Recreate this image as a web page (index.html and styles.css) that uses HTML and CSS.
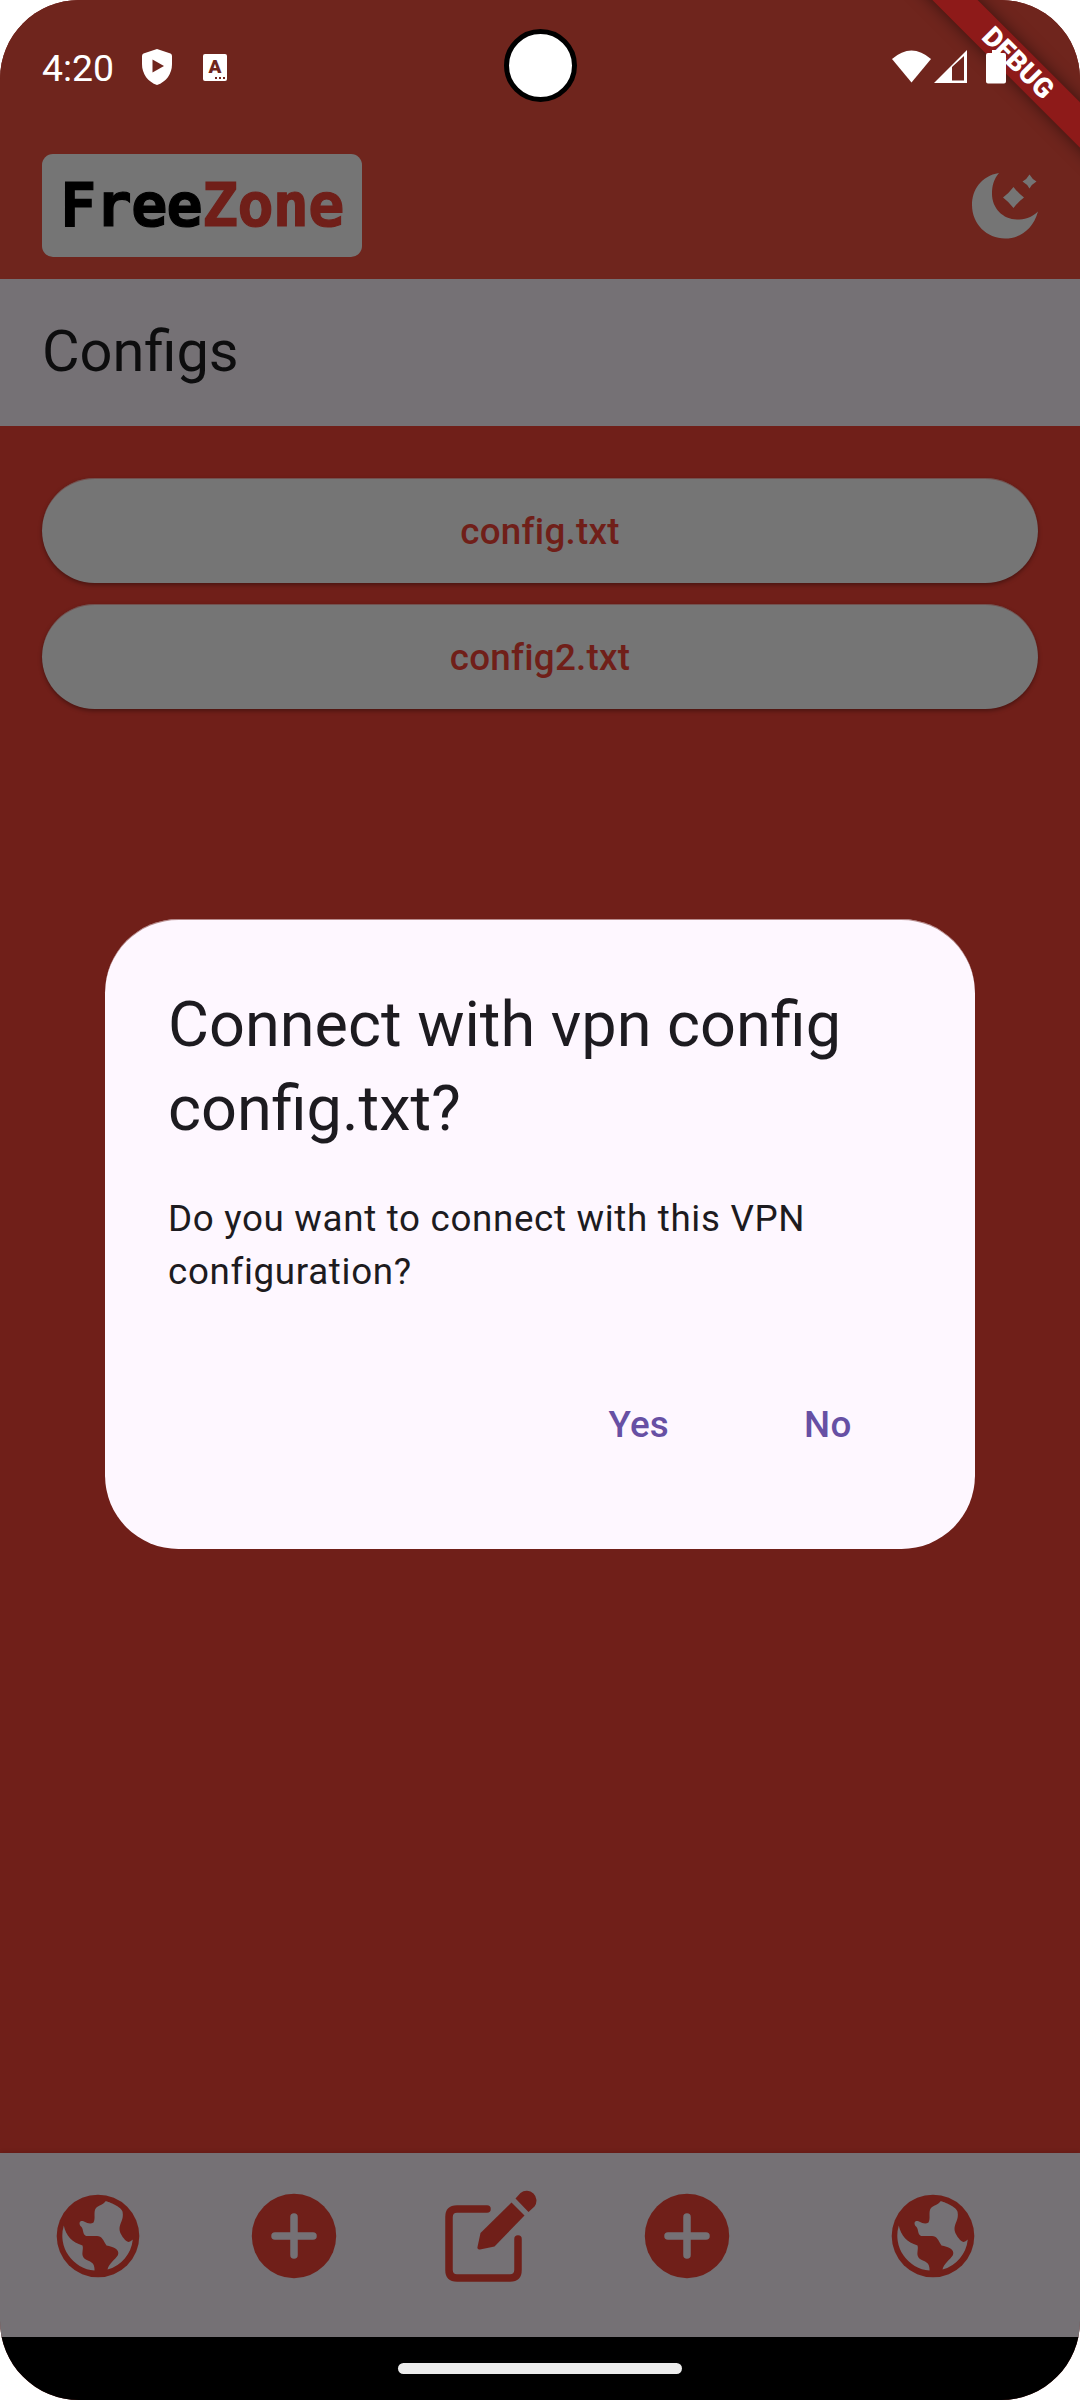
FILE: index.html
```html
<!DOCTYPE html>
<html lang="en">
<head>
<meta charset="utf-8">
<title>FreeZone</title>
<link rel="stylesheet" href="styles.css">
</head>
<body>
<svg class="defs" aria-hidden="true">
  <symbol id="globe" viewBox="0 0 84 84">
    <circle cx="42" cy="42" r="41.3"/>
    <path class="cut" d="M49.500 7.200C53 7.500 66 13 66.600 18C68 26 63.500 29 63.500 35C63.500 39 67 44 70 46.800Q73 49.500 76.800 45.500A35 35 0 0 1 51.500 75.600C53 69 59 66 62 61C64 55 57 53 50.500 51.500C47 46 46 42 41 42H30C26 40 28 34 24.500 32C22 28 25 26 28 27.500Q34 31 37.500 28.500C40 24 37 18 40 14C43 11 47 11 49.500 7.200Z"/>
    <path class="cut" d="M7.800 31.500C10 42 16 48 26.500 51.500C28 56 24 61 29 65C34 68 39 68 38.500 76.500A35 35 0 0 1 7.800 31.500Z"/>
  </symbol>
  <symbol id="plus" viewBox="0 0 86 86">
    <circle cx="43" cy="43" r="42.200"/>
    <path class="cut-line" d="M43 24V62M24 43H62"/>
  </symbol>
</svg>
<div class="phone">
  <div class="status">
    <span class="clock">4:20</span>
    <svg class="shield" viewBox="0 0 30 36"><path d="M15 0L28.500 4.500Q30 5 30 7V15C30 25 24 33 15 36C6 33 0 25 0 15V7Q0 5 1.500 4.500Z"/><path class="hole" d="M10.500 10.500L22 17L10.500 23.500Z"/></svg>
    <div class="letter-icon"><span>A</span><i></i></div>
    <svg class="signals" viewBox="0 0 115 36">
      <path d="M0 9Q19.500-8 39 9L19.500 32.500Z"/>
      <path fill-rule="evenodd" d="M42 33L75 0V33ZM60 17V30.500H72V6Z"/>
      <path d="M100 0H108.500V3H112Q114 3 114 5V31.500Q114 33.500 112 33.500H96Q94 33.500 94 31.500V5Q94 3 96 3H100Z"/>
    </svg>
  </div>
  <header class="header">
    <div class="logo"><span>Free</span><span class="zone">Zone</span></div>
    <svg class="moon" viewBox="0 0 66 66"><path d="M27 0C9 3 0 17 0 32C0 51 15 65.500 33 65.500C47 65.500 61 57 66 38.500C59 45 52 46.500 45 46.500C31 46.500 20 35 20 21C20 12 22 6 27 0Z"/><path d="M41.500 14Q46 20 52 24.500Q46 29 41.500 35Q37 29 31 24.500Q37 20 41.500 14ZM57.500 1.500Q60 6 64.500 8.500Q60 11 57.500 15.500Q55 11 50.500 8.500Q55 6 57.500 1.500Z"/></svg>
  </header>
  <h1 class="title">Configs</h1>
  <main class="list">
    <button class="config">config.txt</button>
    <button class="config">config2.txt</button>
  </main>
  <nav class="nav">
    <svg class="globe"><use href="#globe"/></svg>
    <svg class="plus"><use href="#plus"/></svg>
    <svg class="edit" viewBox="0 0 92 92">
      <path class="frame" d="M42 19H12Q4 19 4 27V80Q4 88 12 88H65Q73 88 73 80V49"/>
      <path d="M66.500 12.500L79.500 25.500L49.500 56.500L35 59.500Q32 60 32.500 57L35.500 43Z"/>
      <path d="M70.500 8.500L75.500 3A9.800 9.800 0 0 1 89.500 16.500L83.500 22Z"/>
    </svg>
    <svg class="plus"><use href="#plus"/></svg>
    <svg class="globe"><use href="#globe"/></svg>
  </nav>
  <div class="gesture"><i></i></div>
  <section class="dialog" role="dialog">
    <h2>Connect with vpn config config.txt?</h2>
    <p>Do you want to connect with this VPN configuration?</p>
    <div class="actions"><button>Yes</button><button>No</button></div>
  </section>
  <div class="camera"></div>
  <div class="ribbon">DEBUG</div>
</div>
</body>
</html>
```
FILE: styles.css
```css
* { box-sizing: border-box; }
body { margin: 0; background: #fff; font-family: Roboto, "Liberation Sans", sans-serif; }
button { border: 0; font: inherit; }
svg { display: block; }
.defs { position: absolute; width: 0; height: 0; }
.phone {
  position: relative; width: 1080px; height: 2400px; overflow: hidden;
  display: flex; flex-direction: column;
  border-radius: 79px; background: #701f19;
}
.status {
  height: 136px; background: #6f251d; color: #fff; fill: #fff;
  display: flex; align-items: center; padding: 0 73px 0 42px;
}
.clock { width: 100px; font-size: 37.400px; line-height: 40px; }
.shield { width: 30px; height: 36px; margin-top: -2px; }
.shield .hole { fill: #6f251d; }
.letter-icon {
  position: relative; width: 24px; height: 27px; margin-left: 31px; margin-top: -2px;
  background: #fff; border-radius: 2px; color: #6f251d;
  font-size: 19px; line-height: 26px; font-weight: 900; text-align: center;
}
.letter-icon i {
  position: absolute; right: 2px; bottom: 2px; width: 10px; height: 2px;
  background: repeating-linear-gradient(90deg, #6f251d 0 2px, #fff 2px 4px);
}
/* the system icons stay above the debug ribbon */
.signals { position: relative; z-index: 2; width: 115px; height: 36px; margin: -1px 0 0 auto; }
.header {
  height: 143px; background: #6f251d; padding: 18px 42px 22px;
  display: flex; align-items: center; justify-content: space-between;
}
.logo {
  width: 320px; height: 103px; border-radius: 11px; background: #757575; color: #000;
  display: flex; justify-content: center; align-items: center;
  font: bold 60px/103px "DejaVu Sans Mono", monospace; letter-spacing: -.7px;
  -webkit-text-stroke: 1.200px currentColor;
}
.logo .zone { color: #701f19; }
.moon { width: 66px; height: 66px; fill: #757575; }
.title {
  margin: 0; height: 147px; padding-left: 42px; background: #757175; color: #0d0d0e;
  font-size: 57.750px; line-height: 145px; font-weight: 400;
}
.list { flex: 1; padding: 52px 42px; display: flex; flex-direction: column; gap: 21px; }
.config {
  height: 105px; padding-top: 3px; border-radius: 53px; background: #757575; color: #701f19;
  font-size: 36.750px; font-weight: 500; letter-spacing: .26px;
  box-shadow: 0 2px 4px rgba(0,0,0,.35), inset 0 1px 0 rgba(112,31,25,.4);
}
.nav {
  height: 184px; background: #757175; fill: #701f19; color: #757175;
  display: flex; align-items: flex-start; padding: 37px 0 0 56px;
  box-shadow: 0 -1px 4px rgba(0,0,0,.12);
}
.cut { fill: #757175; }
.cut-line { fill: none; stroke: #757175; stroke-width: 7.500; stroke-linecap: round; }
.globe { width: 84px; height: 84px; margin-top: 4px; }
.plus { width: 86px; height: 86px; margin: 3px 0 0 111px; }
.edit { width: 92px; height: 92px; margin-left: 108px; }
.edit .frame { fill: none; stroke: #701f19; stroke-width: 7.500; stroke-linecap: round; }
.edit + .plus { margin-left: 107px; }
.plus + .globe:last-child { margin-left: 161px; }
.gesture { height: 63px; background: #000; display: flex; justify-content: center; align-items: center; }
.gesture i { width: 284px; height: 11px; border-radius: 6px; background: #ececec; }
.dialog {
  position: absolute; left: 105px; top: 919px; width: 870px; height: 630px;
  border-radius: 73.500px; background: #fef7ff; color: #1d1b20;
  padding: 64px 63px 62px; display: flex; flex-direction: column;
  box-shadow: inset 0 1px 0 rgba(112,31,25,.5);
}
.dialog h2 { margin: 0; font-size: 63px; line-height: 84px; font-weight: 400; }
.dialog p { margin: 42px 0 0; font-size: 36.750px; line-height: 52.500px; letter-spacing: .67px; }
.actions { margin-top: 63px; display: flex; justify-content: flex-end; gap: 72px; padding-right: 29px; }
.actions button {
  height: 126px; padding: 0 31.500px; background: none; color: #6750a4;
  font-size: 36.750px; font-weight: 500; letter-spacing: .26px;
}
.camera {
  position: absolute; left: 503.500px; top: 29px; width: 73px; height: 73px;
  border: 5px solid #000; border-radius: 50%; background: #fff;
}
.ribbon {
  position: absolute; left: 872.500px; top: 46.500px; width: 290px; height: 32px;
  transform: rotate(45deg); background: #8e1a19; color: #fff;
  box-shadow: 0 0 16px rgba(0,0,0,.5);
  text-align: center; font-size: 27.500px; line-height: 32px; font-weight: 900;
}
```
